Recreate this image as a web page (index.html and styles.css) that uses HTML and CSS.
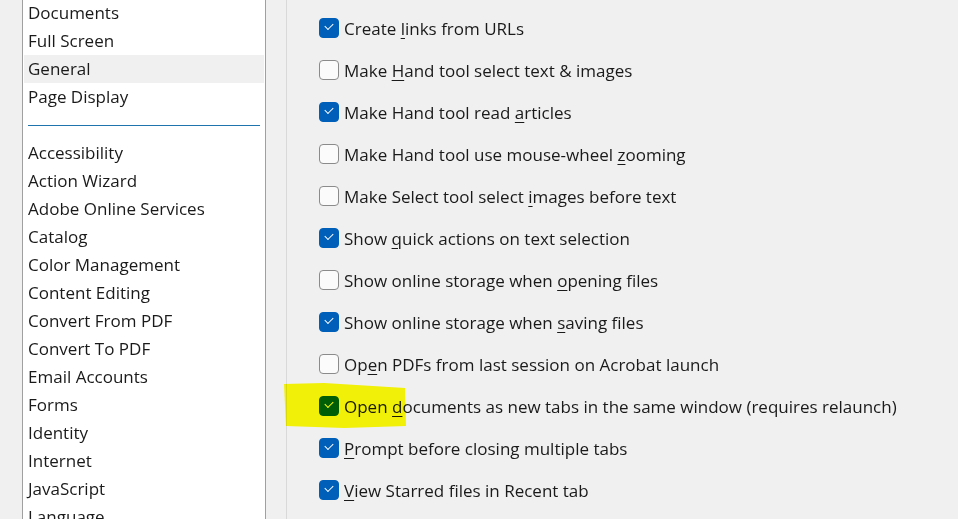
FILE: index.html
```html
<!DOCTYPE html>
<html lang="en">
<head>
  <meta charset="UTF-8">
  <title>Preferences - General</title>
  <link rel="stylesheet" href="styles.css">
</head>
<body>

  <div class="window">

    <div class="categories">
      <div class="cat">Documents</div>
      <div class="cat">Full Screen</div>
      <div class="cat selected">General</div>
      <div class="cat">Page Display</div>
      <div class="cat-sep"><span></span></div>
      <div class="cat">Accessibility</div>
      <div class="cat">Action Wizard</div>
      <div class="cat">Adobe Online Services</div>
      <div class="cat">Catalog</div>
      <div class="cat">Color Management</div>
      <div class="cat">Content Editing</div>
      <div class="cat">Convert From PDF</div>
      <div class="cat">Convert To PDF</div>
      <div class="cat">Email Accounts</div>
      <div class="cat">Forms</div>
      <div class="cat">Identity</div>
      <div class="cat">Internet</div>
      <div class="cat">JavaScript</div>
      <div class="cat">Language</div>
    </div>

    <div class="gutter"></div>

    <div class="options">
      <label class="opt"><span class="box checked"></span><span>Create <u>l</u>inks from URLs</span></label>
      <label class="opt"><span class="box"></span><span>Make <u>H</u>and tool select text &amp; images</span></label>
      <label class="opt"><span class="box checked"></span><span>Make Hand tool read <u>a</u>rticles</span></label>
      <label class="opt"><span class="box"></span><span>Make Hand tool use mouse-wheel <u>z</u>ooming</span></label>
      <label class="opt"><span class="box"></span><span>Make Select tool select <u>i</u>mages before text</span></label>
      <label class="opt"><span class="box checked"></span><span>Show <u>q</u>uick actions on text selection</span></label>
      <label class="opt"><span class="box"></span><span>Show online storage when <u>o</u>pening files</span></label>
      <label class="opt"><span class="box checked"></span><span>Show online storage when <u>s</u>aving files</span></label>
      <label class="opt"><span class="box"></span><span>Op<u>e</u>n PDFs from last session on Acrobat launch</span></label>
      <label class="opt"><span class="box checked"></span><span>Open <u>d</u>ocuments as new tabs in the same window (requires relaunch)</span></label>
      <label class="opt"><span class="box checked"></span><span><u>P</u>rompt before closing multiple tabs</span></label>
      <label class="opt"><span class="box checked"></span><span><u>V</u>iew Starred files in Recent tab</span></label>

      <!-- highlighter mark over the "new tabs" option -->
      <svg class="marker" width="124" height="48" viewBox="0 0 124 48">
        <path d="M0 2 L40 1 L121 6 L122 44 L60 46 L2 44 Z" fill="#ffff08"/>
      </svg>
    </div>

  </div>

</body>
</html>
```

FILE: styles.css
```css
html, body {
  margin: 0;
  height: 100%;
}

body {
  font-family: "Open Sans", "Noto Sans", sans-serif;
  font-size: 17px;
  color: #1a1a1a;
  background: #f0f0f0;
  overflow: hidden;
}

.window {
  display: flex;
  height: 100%;
  padding-left: 22px;
}

.categories {
  width: 240px;
  flex-shrink: 0;
  margin-top: -1px;
  padding: 0 1px;
  background: white;
  border-left: 1px solid #a0a0a0;
  border-right: 1px solid #a0a0a0;
}

.cat {
  height: 28px;
  line-height: 28px;
  padding-left: 4px;
  white-space: nowrap;
}

.cat.selected {
  background: #f0f0f0;
}

.cat-sep {
  height: 28px;
  display: flex;
  align-items: center;
  padding: 0 4px;
}

.cat-sep span {
  flex: 1;
  height: 1px;
  background: #1f74ad;
}

.gutter {
  width: 20px;
  flex-shrink: 0;
  border-right: 1px solid #d9d9d9;
}

.options {
  position: relative;
  flex: 1;
  padding: 7px 0 0 32px;
}

.opt {
  display: flex;
  align-items: center;
  height: 42px;
  white-space: nowrap;
}

.opt u {
  text-underline-offset: 3px;
  text-decoration-thickness: 1px;
}

.box {
  width: 18px;
  height: 18px;
  margin-right: 5px;
  border: 1px solid #8b8b8b;
  border-radius: 4px;
  background: #fbfbfb;
  flex-shrink: 0;
  position: relative;
}

.box.checked {
  background: #005fb8;
  border-color: #005fb8;
}

.box.checked::after {
  content: "";
  position: absolute;
  left: 5px;
  top: 4px;
  width: 7px;
  height: 4px;
  border-left: 1.2px solid white;
  border-bottom: 1.2px solid white;
  transform: rotate(-45deg);
}

.marker {
  position: absolute;
  left: -3px;
  top: 382px;
  mix-blend-mode: multiply;
}
```
